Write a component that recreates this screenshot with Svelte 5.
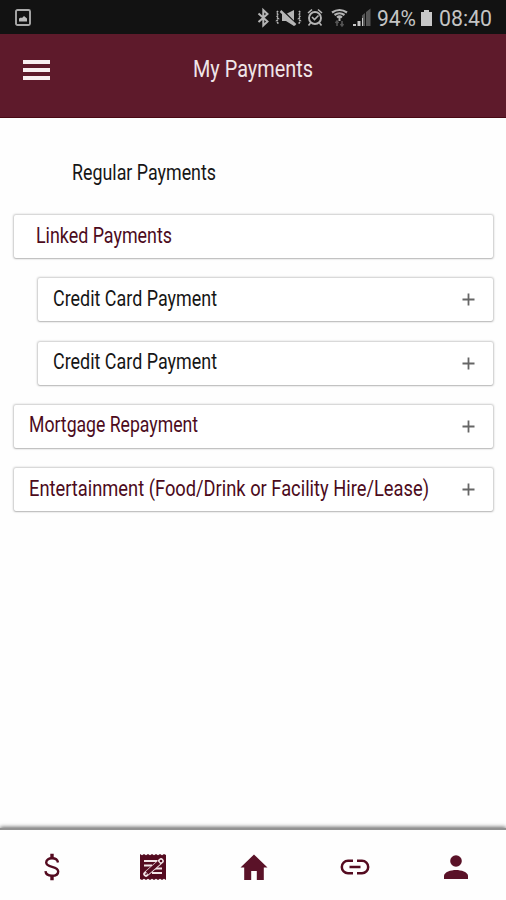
<script>
    const payments = [
        { name: 'Linked Payments', width: 136, kind: 'group' },
        { name: 'Credit Card Payment', width: 164, kind: 'child' },
        { name: 'Credit Card Payment', width: 164, kind: 'child' },
        { name: 'Mortgage Repayment', width: 169, kind: 'single' },
        { name: 'Entertainment (Food/Drink or Facility Hire/Lease)', width: 400, kind: 'single' }
    ];
</script>

<!-- Condensed label, squeezed to the given width -->
{#snippet label(text, width)}
    <svg class="label" {width} height="28">
        <text x="0" y="21" textLength={width} lengthAdjust="spacingAndGlyphs">{text}</text>
    </svg>
{/snippet}

<div class="screen">
    <div class="status">
        <svg class="picture" width="16" height="17" viewBox="0 0 16 17">
            <rect x="1" y="1" width="14" height="15" rx="1.5" fill="none" stroke="#aaa" stroke-width="1.9" />
            <path d="M4 12.500V9.500l2-1 1 .5 2-2 3 2.500v3z" fill="#bbb" />
        </svg>

        <div class="indicators">
            <svg width="240" height="34" viewBox="256 0 240 34" fill="none" stroke="#b5b5b5" stroke-width="1.6">
                <path d="M258.500 13.500l9 8-4.200 4V10l4.200 4-9 8" stroke-width="2" />
                <path d="M278 11l-1.500 2 2 2-2 2 2 2-2 2 2 3M299 11l1.500 2-2 2 2 2-2 2 2 2-2 3" stroke-dasharray="2 1" />
                <path d="M282 14h4l8-4v16l-8-5h-4z" fill="#b5b5b5" stroke="none" />
                <path d="M282 10l15 15" stroke="#131313" stroke-width="2" />
                <path d="M280.500 11l15 14" stroke-width="2.400" />
                <circle cx="315" cy="18" r="6" stroke-width="1.900" />
                <path d="M312 17l2.500 2.500 4-4M308 13l4-3.500M322 13l-4-3.500M310.500 23l-2 2.500M319.500 23l2 2.500" />
                <path d="M332 12.500q7.500-5 15 0M334.500 15q5-3.500 10 0M337 17.500q2.500-2 5 0" stroke-width="2.200" />
                <path d="M339.500 17v4" stroke-width="2" />
                <path d="M337 21v5M335.500 23l1.500-2 1.500 2M342 21v5M340.500 24l1.500 2 1.500-2" stroke="#555" />
                <path d="M353 26v-2h3v2zM357.500 26v-5h3v5z" fill="#c8c8c8" stroke="none" />
                <path d="M362 26V15.500l3-2.500v13zM366 26V12l4.500-3.500V26z" fill="#555" stroke="none" />
                <path d="M362 26v-8h1v8z" fill="#c8c8c8" stroke="none" />
                <path d="M421 12h3v-2h5v2h3v14h-11z" fill="#c8c8c8" stroke="none" />
                <g class="readout">
                    <text x="377" y="26" textLength="39" lengthAdjust="spacingAndGlyphs">94%</text>
                    <text x="439" y="26" textLength="53" lengthAdjust="spacingAndGlyphs">08:40</text>
                </g>
            </svg>
        </div>
    </div>

    <header>
        <button class="menu" aria-label="Menu">
            <span></span>
            <span></span>
            <span></span>
        </button>
        <h1>{@render label('My Payments', 120)}</h1>
    </header>

    <main>
        <h2>{@render label('Regular Payments', 144)}</h2>
        <div class="list">
            {#each payments as payment}
                <div class="card {payment.kind}">
                    {@render label(payment.name, payment.width)}
                    {#if payment.kind !== 'group'}
                        <svg class="plus" width="13" height="13" viewBox="0 0 13 13">
                            <path d="M6.500 0.500v12M0.500 6.500h12" stroke="#666" stroke-width="1.800" />
                        </svg>
                    {/if}
                </div>
            {/each}
        </div>
    </main>

    <nav>
        <button aria-label="Accounts">
            <svg width="16" height="28" viewBox="0 0 16 28" fill="none" stroke="#540b20" stroke-width="2.400">
                <path d="M14 9.500C13.500 6.500 11 5.300 8 5.300c-3.500 0-5.800 1.700-5.800 4.200 0 6 12 2.600 12 9 0 2.700-2.500 4.300-6.200 4.300-4 0-6.300-1.700-6.500-4.600" />
                <path d="M8 .8v4.500M8 22.800v4.400" stroke-width="3.400" />
            </svg>
        </button>
        <button aria-label="Payments">
            <svg width="28" height="28" viewBox="0 0 28 28">
                <path d="M1 1l2 1.200L5 1l2 1.200L9 1l2 1.200L13 1l2 1.200L17 1l2 1.200L21 1l2 1.200L25 1l2 1v25l-2-1.200L23 27l-2-1.200L19 27l-2-1.200L15 27l-2-1.200L11 27l-2-1.200L7 27l-2-1.200L3 27l-2-1z" fill="#540b20" />
                <path d="M5 8h13M5 12.500h8M16 15.500h7M13 20h10" fill="none" stroke="#f2e5e8" stroke-width="1.800" />
                <path d="M7 21L22 8" stroke="#f2e5e8" stroke-width="5.500" stroke-linecap="round" />
                <path d="M8 20L20 9.500" stroke="#540b20" stroke-width="3.800" />
                <path d="M6 22l1-2.500 1.500 1.800z" fill="#540b20" />
                <circle cx="22" cy="8" r="1.300" fill="#540b20" />
            </svg>
        </button>
        <button aria-label="Home">
            <svg width="28" height="26" viewBox="0 0 28 26">
                <path d="M14 .5L.5 13.500h3.700V26h7v-9h5.600v9h7V13.500h3.700z" fill="#5a1228" />
            </svg>
        </button>
        <button aria-label="Links">
            <svg width="30" height="16" viewBox="0 0 30 16" fill="none" stroke="#540b20" stroke-width="2.500">
                <path d="M13 1.800H8a6.200 6.200 0 0 0 0 12.400h5M17 1.800h5a6.200 6.200 0 0 1 0 12.400h-5M9.500 8h11" />
            </svg>
        </button>
        <button aria-label="Profile">
            <svg width="24" height="24" viewBox="0 0 24 24" fill="#5a1228">
                <circle cx="12" cy="6" r="5.800" />
                <path d="M0 24v-3c0-4 7-6 12-6s12 2 12 6v3z" />
            </svg>
        </button>
    </nav>
</div>

<style>
    :global(body) {
        background: #fff;
    }

    .screen {
        display: flex;
        flex-direction: column;
        height: 900px;
        font-family: Roboto, "Liberation Sans", sans-serif;
        background: #fefefe;
    }

    .status {
        display: flex;
        align-items: center;
        justify-content: space-between;
        height: 34px;
        padding: 0 10px 0 15px;
        background: #121212;
    }

    .indicators svg {
        display: block;
    }

    .readout {
        fill: #c4c4c4;
        stroke: none;
        font-size: 22px;
    }

    header {
        display: grid;
        grid-template-columns: 60px 1fr 60px;
        box-sizing: border-box;
        height: 84px;
        padding-top: 22px;
        background: #5e1a2b;
        border-bottom: 1px solid #480914;
    }

    button {
        padding: 0;
        border: none;
        background: none;
    }

    .menu {
        display: flex;
        flex-direction: column;
        gap: 4px;
        height: 20px;
        margin: 4px 0 0 23px;
    }

    .menu span {
        width: 27px;
        height: 4px;
        background: #f8eff1;
    }

    h1,
    h2 {
        margin: 0;
        font-weight: 400;
    }

    h1 {
        text-align: center;
        line-height: 0;
    }

    .label {
        display: inline-block;
        flex: none;
        overflow: visible;
        fill: #161616;
        font-size: 21.5px;
    }

    h1 .label {
        fill: #f0e6e8;
        font-size: 23px;
    }

    main {
        flex: 1;
        padding: 41px 13px 0 14px;
    }

    h2 {
        height: 28px;
        padding-left: 58px;
        line-height: 0;
    }

    .list {
        display: flex;
        flex-direction: column;
        gap: 20.3px;
        margin-top: 28px;
    }

    .card {
        display: flex;
        align-items: center;
        justify-content: space-between;
        box-sizing: border-box;
        height: 43px;
        padding: 0 18px 2px 15px;
        background: #fff;
        border-radius: 2px;
        box-shadow: 0 0 2px 1px rgba(0, 0, 0, 0.2), 0 1px 1px rgba(0, 0, 0, 0.12);
    }

    .card.group {
        padding-left: 22px;
    }

    .card.child {
        margin-left: 24px;
        padding-left: 15px;
    }

    .group .label,
    .single .label {
        fill: #4c0b1c;
    }

    .plus {
        margin-top: 2px;
    }

    nav {
        display: grid;
        grid-template-columns: repeat(5, 101.2px);
        height: 70px;
        background: #fefefe;
        border-top: 2px solid #929292;
        box-shadow: 0 -1px 4px rgba(0, 0, 0, 0.6);
    }

    nav button {
        display: flex;
        align-items: center;
        justify-content: center;
        padding: 3px 0 0 2px;
    }
</style>
